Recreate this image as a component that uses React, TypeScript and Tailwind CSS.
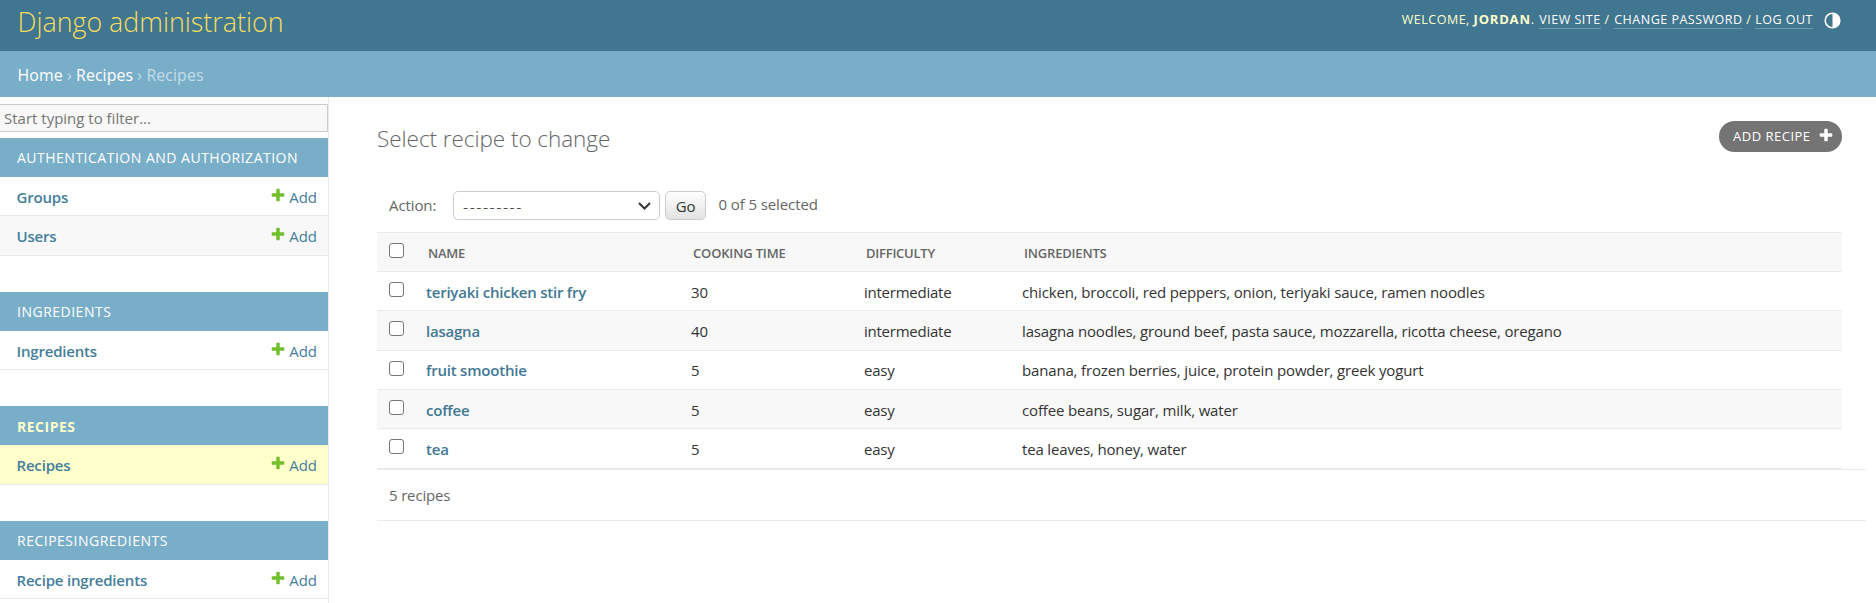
import React from "react";

const PLUS =
  "M1600 796v192q0 40-28 68t-68 28h-416v416q0 40-28 68t-68 28h-192q-40 0-68-28t-28-68v-416h-416q-40 0-68-28t-28-68v-192q0-40 28-68t68-28h416v-416q0-40 28-68t68-28h192q40 0 68 28t28 68v416h416q40 0 68 28t28 68z";

function Plus({ className }: { className: string }) {
  return (
    <svg viewBox="0 0 1792 1792" className={`size-4 shrink-0 ${className}`} fill="currentColor">
      <path d={PLUS} />
    </svg>
  );
}

type Model = { name: string; row: string };
type Section = { title: string; current?: boolean; models: Model[] };

const sections: Section[] = [
  {
    title: "Authentication and Authorization",
    models: [
      { name: "Groups", row: "h-[39px] pt-0.5" },
      { name: "Users", row: "h-10 bg-[#f8f8f8]" },
    ],
  },
  { title: "Ingredients", models: [{ name: "Ingredients", row: "h-[39px] pt-0.5" }] },
  { title: "Recipes", current: true, models: [{ name: "Recipes", row: "h-10 bg-[#ffffcc]" }] },
  { title: "RecipesIngredients", models: [{ name: "Recipe ingredients", row: "h-[39px] pt-0.5" }] },
];

function Sidebar() {
  return (
    <nav className="flex w-[329px] shrink-0 flex-col border-r border-[#eaeaea] pt-[7px]">
      <input
        type="text"
        placeholder="Start typing to filter..."
        className="mb-[6px] h-7 border border-l-0 border-[#ccc] bg-[#f8f8f8] pl-1 text-[15px] leading-[25px] outline-none placeholder:text-[#757575]"
      />
      <div className="flex flex-col gap-9">
        {sections.map((s) => (
          <section key={s.title}>
            <h2
              className={`flex h-[39px] items-center bg-[#79aec8] pl-[17px] text-[14px] uppercase ${
                s.current ? "pt-0.5 font-bold tracking-[0.5px] text-[#ffffcc]" : "tracking-[0.5px] text-white"
              }`}
            >
              {s.title}
            </h2>
            {s.models.map((m) => (
              <div
                key={m.name}
                className={`flex items-center border-b border-[#eaeaea] pr-[10px] pl-4 text-[15px] leading-5 text-[#447e9b] ${m.row}`}
              >
                <a className="flex-1 pl-[0.5px] font-semibold tracking-[-0.18px]">{m.name}</a>
                <Plus className="mr-[3px] mb-1 text-[#70bf2b]" />
                <a className="pr-px">Add</a>
              </div>
            ))}
          </section>
        ))}
      </div>
    </nav>
  );
}

const recipes = [
  ["teriyaki chicken stir fry", "30", "intermediate", "chicken, broccoli, red peppers, onion, teriyaki sauce, ramen noodles", "h-[39px] leading-10"],
  ["lasagna", "40", "intermediate", "lasagna noodles, ground beef, pasta sauce, mozzarella, ricotta cheese, oregano", "h-10 leading-10 bg-[#f8f8f8]"],
  ["fruit smoothie", "5", "easy", "banana, frozen berries, juice, protein powder, greek yogurt", "h-[39px] leading-[38px]"],
  ["coffee", "5", "easy", "coffee beans, sugar, milk, water", "h-[39px] leading-10 bg-[#f8f8f8]"],
  ["tea", "5", "easy", "tea leaves, honey, water", "h-10 leading-10"],
];

function Checkbox() {
  return (
    <span className="pt-[10px] pl-3">
      <span className="block size-[15px] rounded-[3px] border border-[#767676] bg-white" />
    </span>
  );
}

const columns = "grid grid-cols-[49px_265px_173px_158px_1fr] border-b border-[#eaeaea]";

function Results() {
  return (
    <div className="mr-6">
      <div className={`h-10 border-t bg-[#f8f8f8] text-[13px] leading-10 font-semibold tracking-[-0.24px] text-[#666] uppercase ${columns}`}>
        <Checkbox />
        <span className="pl-[2px]">Name</span>
        <span className="pl-[2px] tracking-[-0.16px]">Cooking time</span>
        <span className="pl-[2px]">Difficulty</span>
        <span className="pl-[2px] tracking-[-0.18px]">Ingredients</span>
      </div>
      {recipes.map(([name, time, difficulty, ingredients, row]) => (
        <div key={name} className={`text-[15px] tracking-[-0.16px] text-[#333] ${columns} ${row}`}>
          <Checkbox />
          <a className="font-semibold tracking-[-0.22px] text-[#417893]">{name}</a>
          <span>{time}</span>
          <span className="tracking-[-0.24px]">{difficulty}</span>
          <span>{ingredients}</span>
        </div>
      ))}
    </div>
  );
}

function Header() {
  const link = "border-b border-white/25 text-white";
  return (
    <header className="flex h-[51px] justify-between bg-[#417690] pr-[35px] pl-[17px]">
      <h1 className="pl-[0.5px] text-[26.8px] leading-[44px] font-light text-[#f5dd5d]">Django administration</h1>
      <div className="flex items-start pt-[11px] text-[12.5px] leading-[17px] tracking-[0.5px] whitespace-pre text-[#ffffcc] uppercase">
        <span>Welcome, </span>
        <b className="text-[13px] font-bold tracking-[0.8px]">Jordan</b>
        <span className="pr-px">. </span>
        <a className={link}>View site</a>
        <span className="pr-px"> / </span>
        <a className={link}>Change password</a>
        <span> / </span>
        <a className={link}>Log out</a>
        <svg viewBox="0 0 17 17" className="mt-[1px] ml-[11px] size-[17px]">
          <circle cx="8.5" cy="8.5" r="7.3" fill="none" stroke="#fff" strokeWidth="1.6" />
          <path d="M8.5 1.2a7.3 7.3 0 0 1 0 14.6z" fill="#fff" />
        </svg>
      </div>
    </header>
  );
}

export default function App() {
  return (
    <div className="flex h-[603px] w-full flex-col overflow-hidden bg-white font-['Open_Sans','Noto_Sans',sans-serif]">
      <Header />
      <div className="h-[46px] bg-[#79aec8] pl-[17.5px] text-[15.9px] leading-[49px] tracking-[0.08px] text-[#c4dce8]">
        <a className="text-white">Home</a> › <a className="text-white">Recipes</a> › Recipes
      </div>
      <div className="flex min-h-0 flex-1">
        <Sidebar />
        <main className="min-w-0 flex-1 pr-[10px] pl-12">
          <div className="flex h-[94px] items-start justify-between pr-6 pt-6">
            <h2 className="text-[22.5px] leading-9 font-light tracking-[-0.05px] text-[#666]">Select recipe to change</h2>
            <a className="flex h-[31px] w-[123px] items-center rounded-full bg-[#747474] pl-[14px] text-[13px] tracking-[0.5px] text-white uppercase">
              Add recipe
              <Plus className="mb-[3px] ml-[7px] text-white" />
            </a>
          </div>
          <div className="flex h-[41px] text-[15px] leading-[29px] tracking-[-0.1px] text-[#666]">
            <label className="w-[76px] pl-3">Action:</label>
            <div className="flex h-[29px] w-[207px] items-center justify-between rounded-[5px] border border-[#ccc] pr-2 pl-[9px] text-[#222]">
              <span className="pt-1 text-[16px] font-light tracking-[1.5px]">---------</span>
              <svg viewBox="0 0 13 8" className="h-2 w-[13px]" fill="none" stroke="#333" strokeWidth="2">
                <path d="M1 1l5.5 5.5L12 1" />
              </svg>
            </div>
            <button className="ml-[5px] h-[29px] w-[41px] rounded-[5px] border border-[#ccc] bg-linear-to-b from-white to-[#e2e2e2] leading-[26px] text-[#333]">
              Go
            </button>
            <span className="ml-3 pl-[0.5px] leading-[27px]">0 of 5 selected</span>
          </div>
          <Results />
          <p className="h-[52px] border-y border-[#eaeaea] pl-3 text-[15px] leading-[51px] tracking-[-0.16px] text-[#666]">5 recipes</p>
        </main>
      </div>
    </div>
  );
}
